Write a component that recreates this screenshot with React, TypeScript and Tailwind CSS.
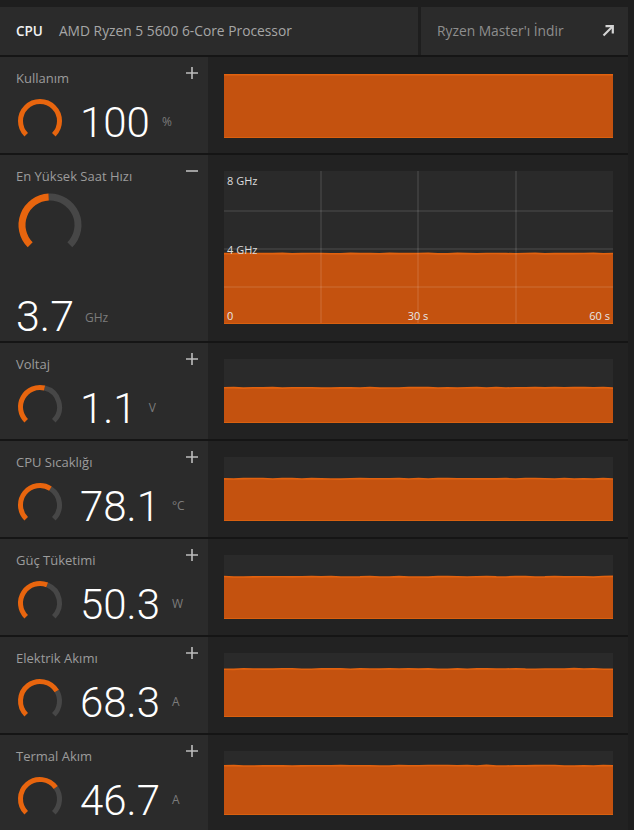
import React from "react";

const ORANGE = "#e8650e";
const FILL = "#c4520f";
const TOPLINE = "#e2620f";

function arcPath(cx: number, cy: number, r: number, a0: number, a1: number) {
  const rad = (a: number) => (a * Math.PI) / 180;
  const x0 = cx + r * Math.cos(rad(a0));
  const y0 = cy + r * Math.sin(rad(a0));
  const x1 = cx + r * Math.cos(rad(a1));
  const y1 = cy + r * Math.sin(rad(a1));
  const large = a1 - a0 > 180 ? 1 : 0;
  return `M ${x0} ${y0} A ${r} ${r} 0 ${large} 1 ${x1} ${y1}`;
}

function Gauge({ size, r, sw, frac }: { size: number; r: number; sw: number; frac: number }) {
  const c = size / 2;
  const start = 135;
  const end = 405;
  const mid = start + 270 * frac;
  return (
    <svg width={size} height={size} viewBox={`0 0 ${size} ${size}`} className="shrink-0">
      {frac < 1 && (
        <path d={arcPath(c, c, r, mid, end)} fill="none" stroke="#474747" strokeWidth={sw} />
      )}
      <path d={arcPath(c, c, r, start, mid)} fill="none" stroke={ORANGE} strokeWidth={sw} />
    </svg>
  );
}

function wobble(seed: number, n: number, amp: number) {
  const pts: number[] = [];
  let s = seed;
  for (let i = 0; i <= n; i++) {
    s = (s * 9301 + 49297) % 233280;
    pts.push(((s / 233280) - 0.5) * amp);
  }
  return pts;
}

function SmallChart({ frac, seed }: { frac: number; seed: number }) {
  const W = 389;
  const H = 64;
  const top = H - H * frac;
  const n = 40;
  const w = wobble(seed, n, frac >= 1 ? 0 : 0.7);
  const ys = w.map((d) => Math.max(0.8, top + d));
  const pts = ys.map((y, i) => `${(i * W) / n},${y}`).join(" ");
  return (
    <svg width={W} height={H} viewBox={`0 0 ${W} ${H}`} className="block">
      <rect x={0} y={0} width={W} height={H} fill="#2a2a2a" />
      <polygon points={`0,${H} ${pts} ${W},${H}`} fill={FILL} />
      <polyline points={pts} fill="none" stroke={TOPLINE} strokeWidth={1.6} />
      <line x1={0} y1={H - 0.5} x2={W} y2={H - 0.5} stroke="#d9600f" strokeWidth={1} />
    </svg>
  );
}

function BigChart() {
  const W = 389;
  const H = 153;
  const frac = 0.46;
  const top = H - H * frac;
  const n = 40;
  const w = wobble(7, n, 0.6);
  const pts = w.map((d, i) => `${(i * W) / n},${top + d}`).join(" ");
  const font = "'Open Sans', 'Noto Sans', sans-serif";
  return (
    <svg width={W} height={H} viewBox={`0 0 ${W} ${H}`} className="block">
      <rect x={0} y={0} width={W} height={H} fill="#2a2a2a" />
      <polygon points={`0,${H} ${pts} ${W},${H}`} fill={FILL} />
      <polyline points={pts} fill="none" stroke={TOPLINE} strokeWidth={1.6} />
      {[97, 194, 292].map((x) => (
        <line key={x} x1={x} y1={0} x2={x} y2={H} stroke="rgba(255,255,255,0.11)" strokeWidth={1.6} />
      ))}
      {[40, 78, 116].map((y) => (
        <line key={y} x1={0} y1={y} x2={W} y2={y} stroke="rgba(255,255,255,0.11)" strokeWidth={1.6} />
      ))}
      <line x1={0} y1={H - 0.5} x2={W} y2={H - 0.5} stroke="#d9600f" strokeWidth={1} />
      <text x={3} y={14} fill="#dcdcdc" fontSize={11} fontFamily={font}>8 GHz</text>
      <text x={3} y={83} fill="#dcdcdc" fontSize={11} fontFamily={font}>4 GHz</text>
      <text x={3} y={149} fill="#e8e8e8" fontSize={11} fontFamily={font}>0</text>
      <text x={194} y={149} fill="#e8e8e8" fontSize={11} fontFamily={font} textAnchor="middle">30 s</text>
      <text x={386} y={149} fill="#e8e8e8" fontSize={11} fontFamily={font} textAnchor="end">60 s</text>
    </svg>
  );
}

function Plus() {
  return (
    <svg width="12" height="12" viewBox="0 0 12 12" className="block">
      <path d="M6 0 V12 M0 6 H12" stroke="#bdbdbd" strokeWidth="1.6" />
    </svg>
  );
}

function Minus() {
  return (
    <svg width="12" height="12" viewBox="0 0 12 12" className="block">
      <path d="M0 6 H12" stroke="#bdbdbd" strokeWidth="1.6" />
    </svg>
  );
}

type Row = { label: string; value: string; unit: string; g: number; c: number; seed: number };

const rows: Row[] = [
  { label: "Voltaj", value: "1.1", unit: "V", g: 0.55, c: 0.55, seed: 3 },
  { label: "CPU Sıcaklığı", value: "78.1", unit: "°C", g: 0.62, c: 0.66, seed: 11 },
  { label: "Güç Tüketimi", value: "50.3", unit: "W", g: 0.58, c: 0.66, seed: 23 },
  { label: "Elektrik Akımı", value: "68.3", unit: "A", g: 0.72, c: 0.75, seed: 41 },
  { label: "Termal Akım", value: "46.7", unit: "A", g: 0.7, c: 0.77, seed: 57 },
];

const numFont = "font-['Roboto','Open_Sans',sans-serif]";

function LeftTop({ label, minus }: { label: string; minus?: boolean }) {
  return (
    <div className="flex h-[18px] items-start justify-between">
      <span className="text-[13px] leading-[18px] text-[#9c9c9c]">{label}</span>
      <span className="mt-[-2px]">{minus ? <Minus /> : <Plus />}</span>
    </div>
  );
}

function SmallRow({ r, pt = "pt-[16px]" }: { r: Row; pt?: string }) {
  return (
    <div className="flex h-[96px] shrink-0">
      <div className="flex w-[208px] flex-col bg-[#2b2b2b] pl-[16px] pr-[10px] pt-[12px]">
        <LeftTop label={r.label} />
        <div className="mt-[10px] flex items-center">
          <Gauge size={48} r={19.5} sw={5} frac={r.g} />
          <span className={`ml-[16px] mt-[4px] text-[42px] font-light leading-none text-white ${numFont}`}>
            {r.value}
          </span>
          <span className="ml-[12px] mt-[2px] text-[12px] leading-none text-[#7c7c7c]">{r.unit}</span>
        </div>
      </div>
      <div className={`flex-1 bg-[#222222] pl-[16px] ${pt}`}>
        <SmallChart frac={r.c} seed={r.seed} />
      </div>
    </div>
  );
}

export default function App() {
  return (
    <div className="h-[830px] w-[634px] overflow-hidden bg-[#1e1e1e] pt-[7px] font-['Open_Sans','Noto_Sans',sans-serif]">
      <div className="flex w-[628px] flex-col gap-[2px] bg-[#151515]">
        <div className="flex h-[48px] gap-[3px] bg-[#1e1e1e]">
          <div className="flex w-[418px] items-center bg-[#2b2b2b] pl-[16px]">
            <span className="text-[13.5px] font-semibold text-[#f2f2f2]">CPU</span>
            <span className="ml-[16px] text-[13.8px] text-[#a6a6a6]">AMD Ryzen 5 5600 6-Core Processor</span>
          </div>
          <div className="flex flex-1 items-center justify-between bg-[#2b2b2b] pl-[16px] pr-[14px]">
            <span className="text-[13.8px] text-[#8e8e8e]">Ryzen Master'ı İndir</span>
            <svg width="12" height="12" viewBox="0 0 12 12">
              <path d="M1.5 10.5 L10 2" stroke="#d4d4d4" strokeWidth="2.2" />
              <path d="M3.5 1.2 H10.8 V8.5" fill="none" stroke="#d4d4d4" strokeWidth="2.2" />
            </svg>
          </div>
        </div>

        <SmallRow r={{ label: "Kullanım", value: "100", unit: "%", g: 1, c: 1, seed: 1 }} pt="pt-[17px]" />

        {/* En Yüksek Saat Hızı */}
        <div className="flex h-[186px] shrink-0">
          <div className="flex w-[208px] flex-col bg-[#2b2b2b] pl-[16px] pr-[10px] pt-[12px]">
            <LeftTop label="En Yüksek Saat Hızı" minus />
            <div className="mt-[7px] pl-[1px]">
              <Gauge size={66} r={28} sw={7} frac={0.49} />
            </div>
            <div className="mt-auto flex items-center pb-[3px]">
              <span className={`text-[43px] font-light leading-none text-white ${numFont}`}>3.7</span>
              <span className="ml-[11px] mt-[2px] text-[12px] leading-none text-[#7c7c7c]">GHz</span>
            </div>
          </div>
          <div className="flex-1 bg-[#222222] pl-[16px] pt-[16px]">
            <BigChart />
          </div>
        </div>

        {rows.map((r) => (
          <SmallRow key={r.label} r={r} />
        ))}
      </div>
    </div>
  );
}
